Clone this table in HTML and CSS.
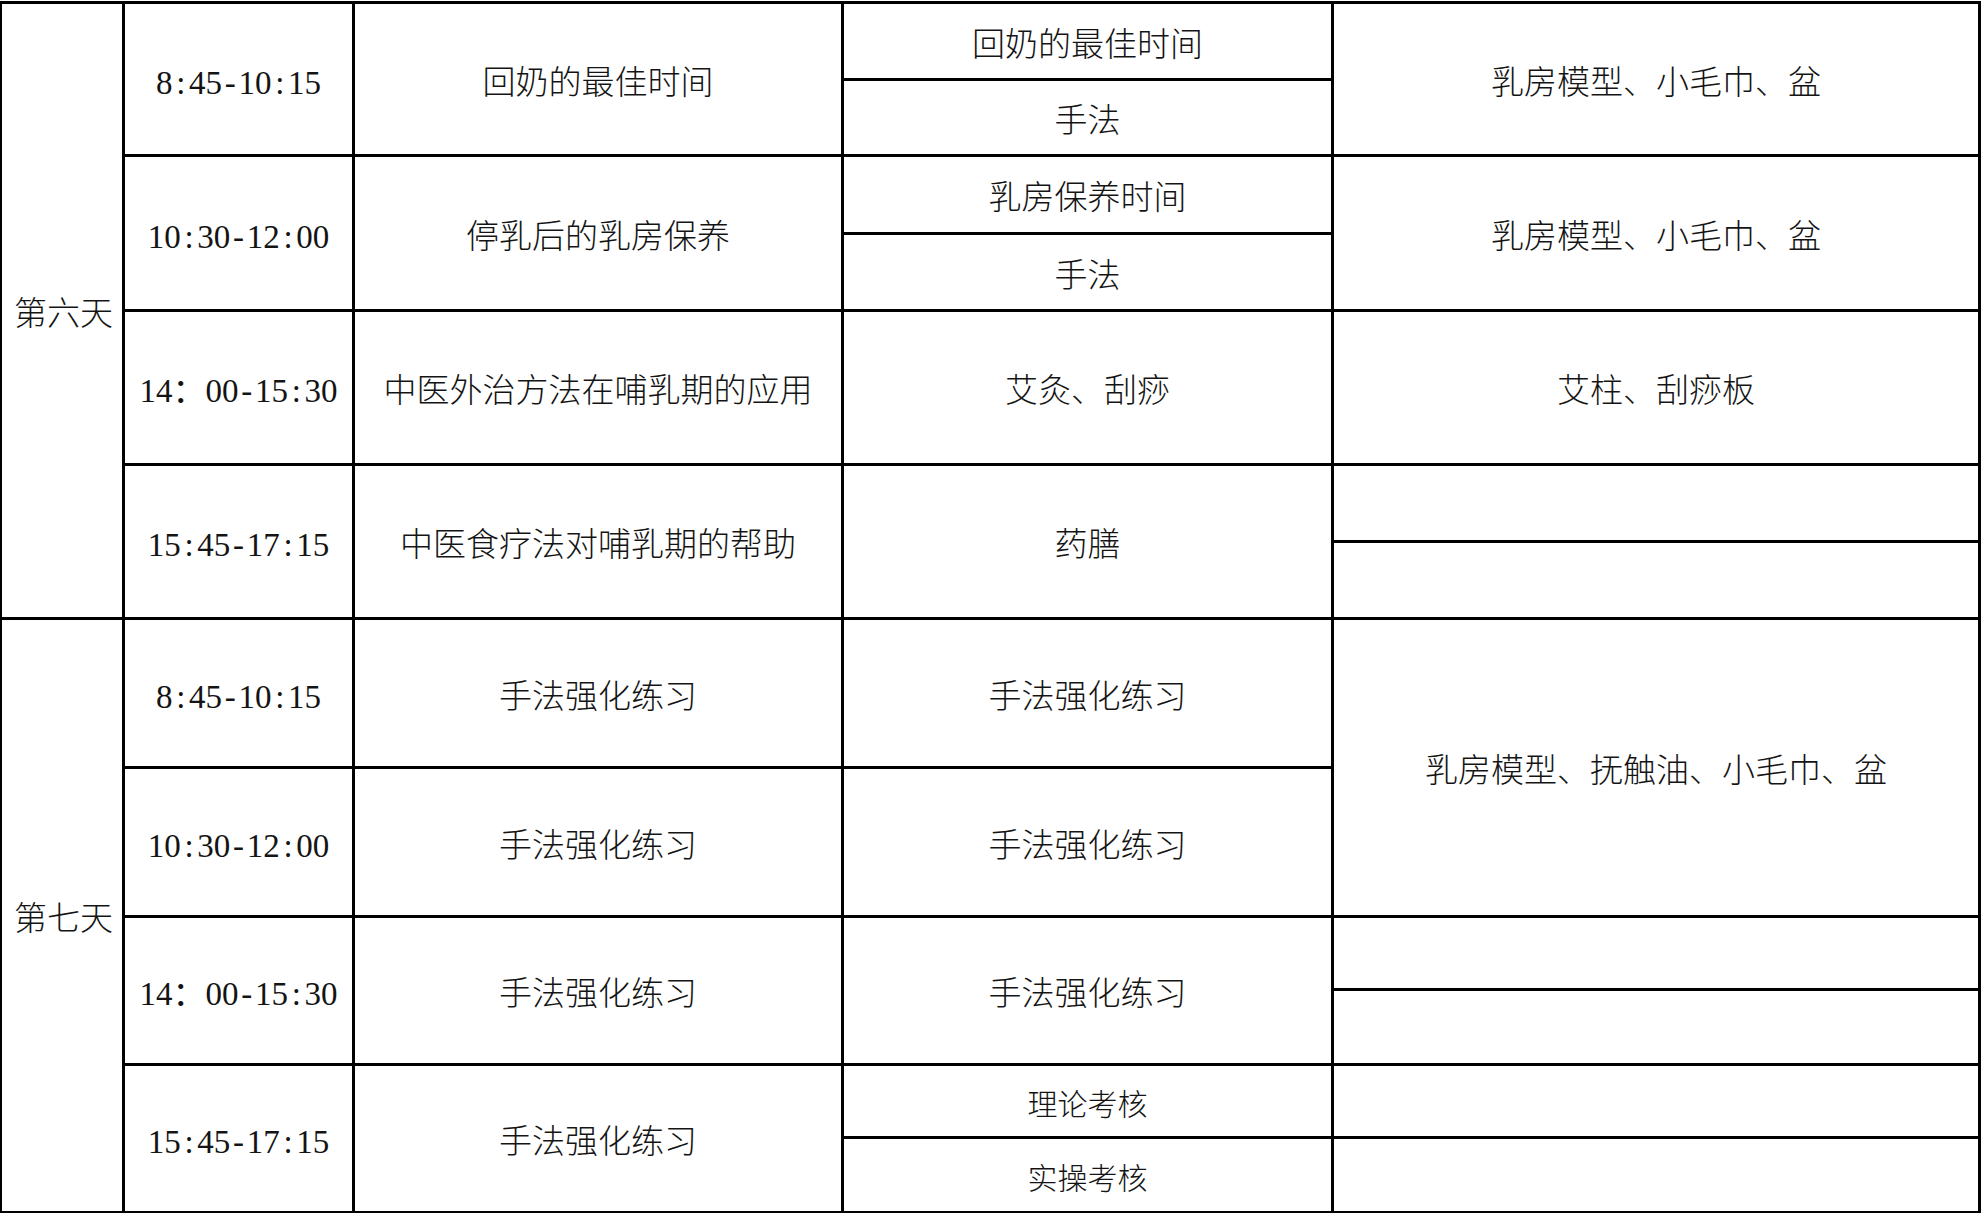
FILE: index.html
```html
<!DOCTYPE html>
<html lang="zh-CN">
<head>
<meta charset="utf-8">
<title>课程安排</title>
<link rel="stylesheet" href="styles.css">
</head>
<body>
<div class="sheet">
  <div class="c day d6">第六天</div>
  <div class="c day d7">第七天</div>

  <div class="c r2 time">8<span class="sep">:</span>45<span class="sep">-</span>10<span class="sep">:</span>15</div>
  <div class="c r2">回奶的最佳时间</div>
  <div class="c">回奶的最佳时间</div>
  <div class="c r2">乳房模型、小毛巾、盆</div>
  <div class="c">手法</div>

  <div class="c r2 time">10<span class="sep">:</span>30<span class="sep">-</span>12<span class="sep">:</span>00</div>
  <div class="c r2">停乳后的乳房保养</div>
  <div class="c">乳房保养时间</div>
  <div class="c r2">乳房模型、小毛巾、盆</div>
  <div class="c">手法</div>

  <div class="c r2 time">14<span class="wide">：</span>00<span class="sep">-</span>15<span class="sep">:</span>30</div>
  <div class="c r2">中医外治方法在哺乳期的应用</div>
  <div class="c r2">艾灸、刮痧</div>
  <div class="c r2">艾柱、刮痧板</div>

  <div class="c r2 time">15<span class="sep">:</span>45<span class="sep">-</span>17<span class="sep">:</span>15</div>
  <div class="c r2">中医食疗法对哺乳期的帮助</div>
  <div class="c r2">药膳</div>
  <div class="c"></div>
  <div class="c"></div>

  <div class="c r2 time">8<span class="sep">:</span>45<span class="sep">-</span>10<span class="sep">:</span>15</div>
  <div class="c r2">手法强化练习</div>
  <div class="c r2">手法强化练习</div>
  <div class="c r4">乳房模型、抚触油、小毛巾、盆</div>

  <div class="c r2 time">10<span class="sep">:</span>30<span class="sep">-</span>12<span class="sep">:</span>00</div>
  <div class="c r2">手法强化练习</div>
  <div class="c r2">手法强化练习</div>

  <div class="c r2 time">14<span class="wide">：</span>00<span class="sep">-</span>15<span class="sep">:</span>30</div>
  <div class="c r2">手法强化练习</div>
  <div class="c r2">手法强化练习</div>
  <div class="c"></div>
  <div class="c"></div>

  <div class="c r2 time">15<span class="sep">:</span>45<span class="sep">-</span>17<span class="sep">:</span>15</div>
  <div class="c r2">手法强化练习</div>
  <div class="c sm">理论考核</div>
  <div class="c"></div>
  <div class="c sm">实操考核</div>
  <div class="c"></div>
</div>
</body>
</html>
```

FILE: styles.css
```css
html, body {
  margin: 0;
  padding: 0;
  background: #ffffff;
}

body {
  font-family: "Liberation Serif", "Noto Sans CJK SC", serif;
  color: #141414;
  overflow: hidden;
}

.sheet {
  display: grid;
  grid-template-columns: 120px 227px 486px 487px 644px;
  grid-template-rows:
    74px 73px
    75px 74px
    74px 74px
    74px 74px
    72px 71px
    72px 71px
    70px 72px
    70px 72px;
  gap: 3px;
  padding: 3px;
  background: #000000;
  width: max-content;
  margin: 1px 0 0 -1px;
}

.c {
  background: #ffffff;
  display: flex;
  align-items: center;
  justify-content: center;
  padding-top: 8px;
  box-sizing: border-box;
  font-size: 33px;
  font-weight: 300;
  line-height: 1;
  white-space: nowrap;
}

.r2 {
  grid-row: span 2;
}

.r4 {
  grid-row: span 4;
}

.day {
  grid-column: 1;
  padding-left: 3px;
}

.d6 {
  grid-row: 1 / 9;
}

.d7 {
  grid-row: 9 / 17;
}

.sm {
  font-size: 30px;
}

.time {
  font-weight: 400;
}

.sep {
  display: inline-block;
  width: 0.5em;
  text-align: center;
}

.wide {
  display: inline-block;
  width: 1em;
  text-align: left;
}
```
